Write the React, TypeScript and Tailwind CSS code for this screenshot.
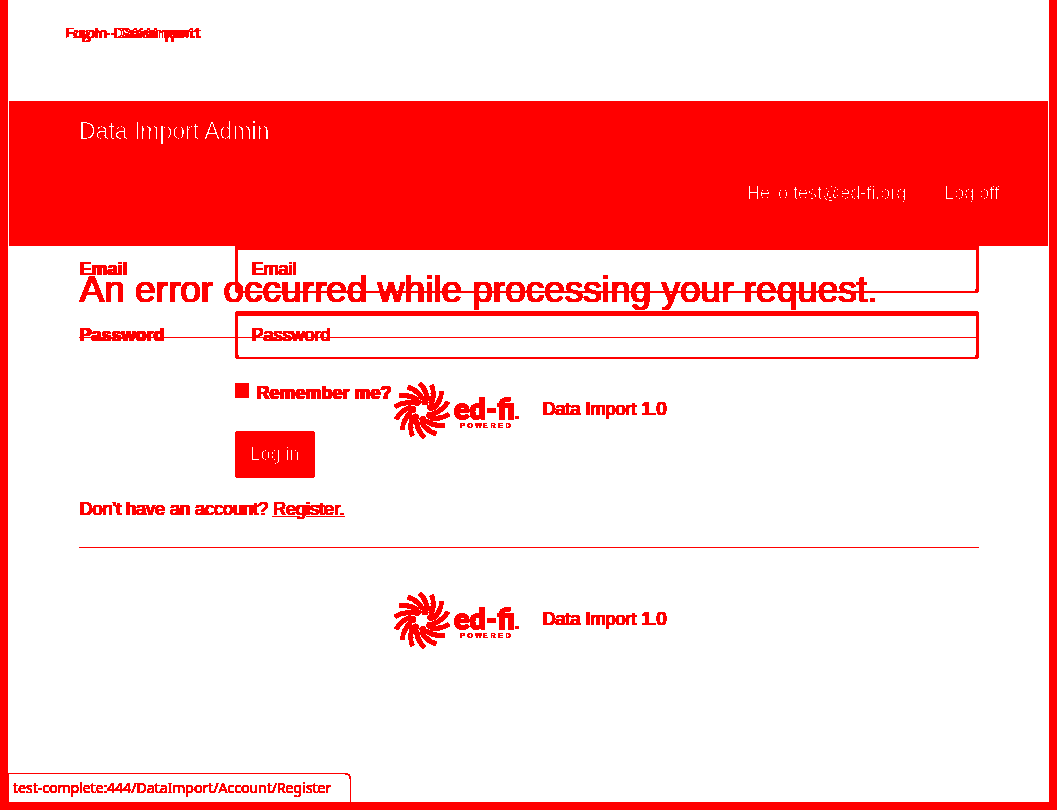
import React from "react";

const ARMS = Array.from({ length: 14 }, (_, i) => (i * 360) / 14);
const POWERED = "POWERED".split("");

/* Flattens every tone to either pure red or pure white. */
function DiffFilter() {
  return (
    <svg width="0" height="0" className="absolute" aria-hidden="true">
      <filter id="two-tone" x="0" y="0" width="100%" height="100%" colorInterpolationFilters="sRGB">
        <feComponentTransfer>
          <feFuncG type="discrete" tableValues="0 0 0 0 0 0 0 0 0 0 0 0 0 0 0 0 0 0 0 0 0 0 0 1" />
          <feFuncB type="discrete" tableValues="0 0 0 0 0 0 0 0 0 0 0 0 0 0 0 0 0 0 0 0 0 0 0 1" />
        </feComponentTransfer>
      </filter>
    </svg>
  );
}

function Logo() {
  return (
    <svg
      width="126"
      height="58"
      viewBox="0 0 126 58"
      role="img"
      aria-label="ed-fi powered"
      fill="#ff0000"
      className="[text-shadow:none]"
    >
      <g transform="translate(28 28.5)">
        {ARMS.map((a) => (
          <g key={a} transform={`rotate(${a})`}>
            <path d="M-2.5 -27 Q1 -24 3 -20" fill="none" stroke="#ff0000" strokeWidth="4" />
            <path d="M2 -21 Q5 -17 5.5 -10" fill="none" stroke="#ff0000" strokeWidth="4.2" />
          </g>
        ))}
        {ARMS.filter((_, i) => i % 2 === 0).map((a) => (
          <circle key={a} cx="3" cy="-8.6" r="3.1" transform={`rotate(${a})`} />
        ))}
      </g>
      <text x="60" y="37" fontFamily="Lato, sans-serif" fontWeight="900" fontSize="29" stroke="#ff0000" strokeWidth="1">
        ed-fi
      </text>
      <rect x="121" y="34" width="4" height="3" />
      <text y="46" fontFamily="Liberation Sans, sans-serif" fontWeight="700" fontSize="7">
        {POWERED.map((c, i) => (
          <tspan key={i} x={66 + i * 7.6}>
            {c}
          </tspan>
        ))}
      </text>
    </svg>
  );
}

function Footer() {
  return (
    <footer className="flex items-center justify-center gap-[22px] pl-[2px]">
      <Logo />
      <p className="pb-1">Data Import 1.0</p>
    </footer>
  );
}

function ErrorPage() {
  return (
    <section className="col-start-1 row-start-1 pt-5 pr-[69px] pl-[70px]">
      <h2 className="text-[37px] leading-[48px]">An error occurred while processing your request.</h2>
      <hr className="mt-[23px] mb-11 border-t border-[#ff0000]" />
      <Footer />
    </section>
  );
}

const field =
  "h-12 w-full min-w-0 rounded border-x-[3px] border-t-[5px] border-b-2 border-[#ff0000] bg-transparent px-[13px] pb-0.5 placeholder:text-[#ff0000] placeholder:opacity-100 outline-none [text-shadow:1px_0_0_#ff0000]";

function LoginPage() {
  return (
    <section className="col-start-1 row-start-1 -mt-px pr-[69px] pl-[70px]">
      <form className="grid grid-cols-[156px_1fr] items-center" onSubmit={(e) => e.preventDefault()}>
        <label htmlFor="email" className="font-bold">Email</label>
        <input id="email" type="email" placeholder="Email" className={field} />
        <label htmlFor="password" className="mt-[18px] font-bold">Password</label>
        <input id="password" type="password" placeholder="Password" className={`${field} mt-[18px]`} />
        <div className="col-start-2 mt-[22px] flex items-start gap-[7px]">
          <input id="remember" type="checkbox" className="mt-0.5 h-[15px] w-[14px] appearance-none bg-[#ff0000]" />
          <label htmlFor="remember" className="font-bold">Remember me?</label>
        </div>
        <button type="submit" className="col-start-2 mt-[26px] h-[47px] w-20 rounded bg-[#ff0000] pb-0.5 text-white">
          Log in
        </button>
      </form>
      <p className="mt-[19px]">
        Don't have an account?{" "}
        <a href="#register" className="underline">Register.</a>
      </p>
      <hr className="mt-[26px] mb-11 border-t border-[#ff0000]" />
      <Footer />
    </section>
  );
}

export default function App() {
  return (
    <>
      <DiffFilter />
      <div className="relative isolate flex min-h-screen flex-col border-x-8 border-b-8 border-[#ff0000] bg-white font-['Liberation_Sans',sans-serif] text-lg leading-6 text-[#ff0000] [filter:url(#two-tone)]">
        <div className="grid h-[101px] content-start px-[57px] pt-[21px] font-['Open_Sans',sans-serif] text-[15px] leading-[22px] text-[#00ffff] [text-shadow:1px_0_0_#00ffff]">
          <span className="col-start-1 row-start-1 mix-blend-difference">Log in - DataImport</span>
          <span className="col-start-1 row-start-1 mix-blend-difference">Error - DataImport</span>
        </div>
        <header className="mx-px h-[145px] bg-[#ff0000] text-white">
          <div className="px-[70px] pt-4 text-[23px] leading-7">
            <a href="#home">Data Import Admin</a>
          </div>
          <nav className="flex justify-end gap-[38px] pt-9 pr-[49px]">
            <a href="#account">Hello test@ed-fi.org</a>
            <a href="#logoff">Log off</a>
          </nav>
        </header>
        <main className="mx-px grid [text-shadow:1px_0_0_#ff0000]">
          <ErrorPage />
          <LoginPage />
        </main>
        <div className="absolute bottom-0 left-0 rounded-tr-md border-t border-r border-l border-[#ff0000] py-[3px] pr-[19px] pl-1 font-['Noto_Sans',sans-serif] text-sm leading-[22px]">
          test-complete:444/DataImport/Account/Register
        </div>
      </div>
    </>
  );
}
